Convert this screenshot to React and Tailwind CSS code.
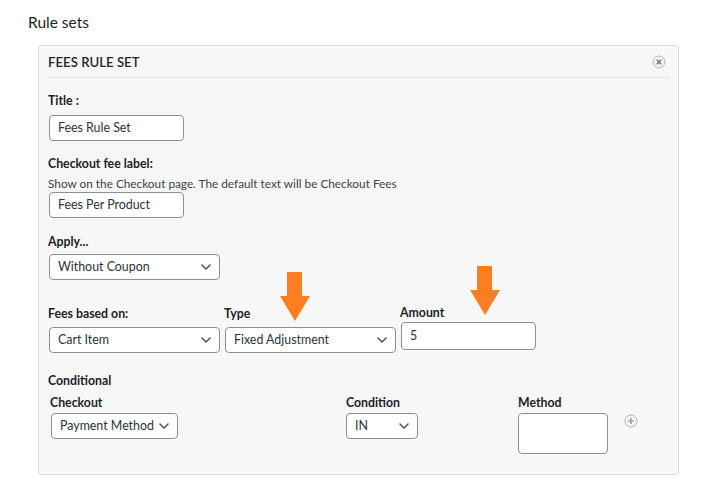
import React from "react";

const Chevron = () => (
  <svg width="10" height="6" viewBox="0 0 10 6" className="shrink-0">
    <path d="M1 1l4 4 4-4" fill="none" stroke="#50575e" strokeWidth="1.6" strokeLinecap="round" strokeLinejoin="round" />
  </svg>
);

const Select = ({ value, className }) => (
  <div className={"flex items-center justify-between bg-white border border-[#8c8f94] rounded-[4px] h-[26px] pl-[8px] pr-[8px] text-[#2c3338] text-[12.4px] " + className}>
    <span className="whitespace-nowrap">{value}</span>
    <Chevron />
  </div>
);

const Input = ({ value, className }) => (
  <div className={"flex items-center bg-white border border-[#8c8f94] rounded-[4px] h-[26px] px-[8px] text-[#2c3338] text-[12.4px] " + className}>
    <span className="whitespace-nowrap">{value}</span>
  </div>
);

const Label = ({ children, className = "" }) => (
  <div className={"font-bold text-[#1d2327] text-[12.3px] leading-[18px] " + className}>{children}</div>
);

const Arrow = ({ className }) => (
  <svg width="30" height="49" viewBox="0 0 30 49" className={"absolute " + className}>
    <rect x="7" y="0" width="15" height="25" fill="#fd7e22" />
    <polygon points="0,24 30,24 15,49" fill="#fd7e22" />
  </svg>
);

const RoundIcon = ({ kind }) => (
  <svg width="14" height="14" viewBox="0 0 14 14">
    <circle cx="7" cy="7" r="6" fill="#f3f3f3" stroke="#b4b4b4" strokeWidth="1" />
    {kind === "x" ? (
      <path d="M4.8 4.8l4.4 4.4M9.2 4.8l-4.4 4.4" stroke="#777" strokeWidth="1.6" />
    ) : (
      <path d="M7 4v6M4 7h6" stroke="#888" strokeWidth="1.2" />
    )}
  </svg>
);

export default function App() {
  return (
    <div className="w-[703px] h-[492px] bg-white overflow-hidden font-['Lato','Segoe_UI',sans-serif] text-[#1d2327]">
      <h2 className="pl-[28px] pt-[12px] text-[15.5px] leading-[20px] font-normal text-[#1d2327]">Rule sets</h2>
      <div className="relative ml-[38px] mt-[13px] w-[641px] h-[430px] border border-[#dcdcde] bg-[#f7f7f7] rounded-[3px] px-[9px]">
        <div className="h-[32px] flex items-center justify-between border-b border-[#e2e2e2] pt-[3px]">
          <span className="text-[13.2px] font-semibold text-[#23282d]">FEES RULE SET</span>
          <span className="mr-[3px] flex -mt-[3px]"><RoundIcon kind="x" /></span>
        </div>

        <Label className="mt-[14px]">Title :</Label>
        <Input value="Fees Rule Set" className="ml-px mt-[5px] w-[135px]" />

        <Label className="mt-[14px]">Checkout fee label:</Label>
        <div className="text-[11.8px] leading-[16px] mt-[3px] text-[#3c434a]">Show on the Checkout page. The default text will be Checkout Fees</div>
        <Input value="Fees Per Product" className="ml-px w-[135px]" />

        <Label className="mt-[15px]">Apply...</Label>
        <Select value="Without Coupon" className="ml-px mt-[3px] w-[171px]" />

        <div className="relative flex mt-[25px]">
          <Arrow className="left-[232px] top-[-33px]" />
          <Arrow className="left-[422px] top-[-39px]" />
          <div className="w-[176px] flex flex-col">
            <Label>Fees based on:</Label>
            <Select value="Cart Item" className="ml-px mt-[4px] w-[171px]" />
          </div>
          <div className="w-[176px] flex flex-col">
            <Label>Type</Label>
            <Select value="Fixed Adjustment" className="ml-px mt-[4px] w-[171px]" />
          </div>
          <div className="flex flex-col -mt-[1px]">
            <Label>Amount</Label>
            <Input value="5" className="ml-px mt-0 w-[135px] h-[28px]" />
          </div>
        </div>

        <Label className="mt-[19px]">Conditional</Label>
        <div className="flex mt-[4px] pl-[2px]">
          <div className="w-[296px] flex flex-col">
            <Label>Checkout</Label>
            <Select value="Payment Method" className="ml-px mt-px w-[127px] pr-[7px]" />
          </div>
          <div className="w-[172px] flex flex-col">
            <Label>Condition</Label>
            <Select value="IN" className="mt-px w-[72px]" />
          </div>
          <div className="flex flex-col">
            <Label>Method</Label>
            <div className="mt-px w-[90px] h-[41px] bg-white border border-[#8c8f94] rounded-[4px]" />
          </div>
          <div className="ml-[16px] mt-[20px]"><RoundIcon kind="plus" /></div>
        </div>
      </div>
    </div>
  );
}
